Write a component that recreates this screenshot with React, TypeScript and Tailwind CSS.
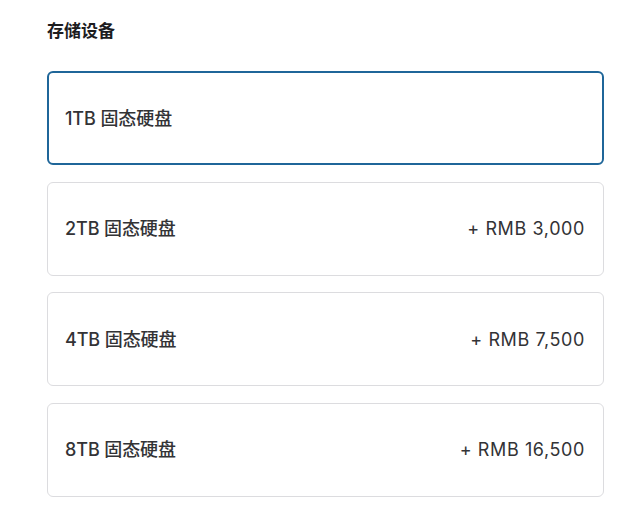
const OPTIONS = [
  { label: '1TB 固态硬盘', price: '' },
  { label: '2TB 固态硬盘', price: '+ RMB 3,000' },
  { label: '4TB 固态硬盘', price: '+ RMB 7,500' },
  { label: '8TB 固态硬盘', price: '+ RMB 16,500' },
];

export default function App() {
  const selected = 0;
  return (
    <div
      className="min-h-[522px] w-[640px] bg-white pl-[47px] pr-[36px] pt-[20px] text-[#1d1d1f]"
      style={{ fontFamily: 'Inter, "Noto Sans CJK SC", sans-serif' }}
    >
      <h2 className="text-[17px] font-semibold leading-[22px]">存储设备</h2>
      <div className="mt-[29px] flex flex-col gap-[16.6px]">
        {OPTIONS.map((opt, i) => (
          <div
            key={opt.label}
            className={
              i === selected
                ? 'flex h-[94px] items-center justify-between rounded-[6px] border-2 border-[#1f6699] pl-[16px] pr-[18px]'
                : 'flex h-[94px] items-center justify-between rounded-[6px] border border-[#dcdcdf] pl-[17px] pr-[18px]'
            }
          >
            <span className="text-[18px] font-medium tracking-[-0.1px] text-[#333336]">{opt.label}</span>
            {opt.price && <span className="text-[18px] font-normal tracking-[0.6px] text-[#333336]">{opt.price}</span>}
          </div>
        ))}
      </div>
    </div>
  );
}
